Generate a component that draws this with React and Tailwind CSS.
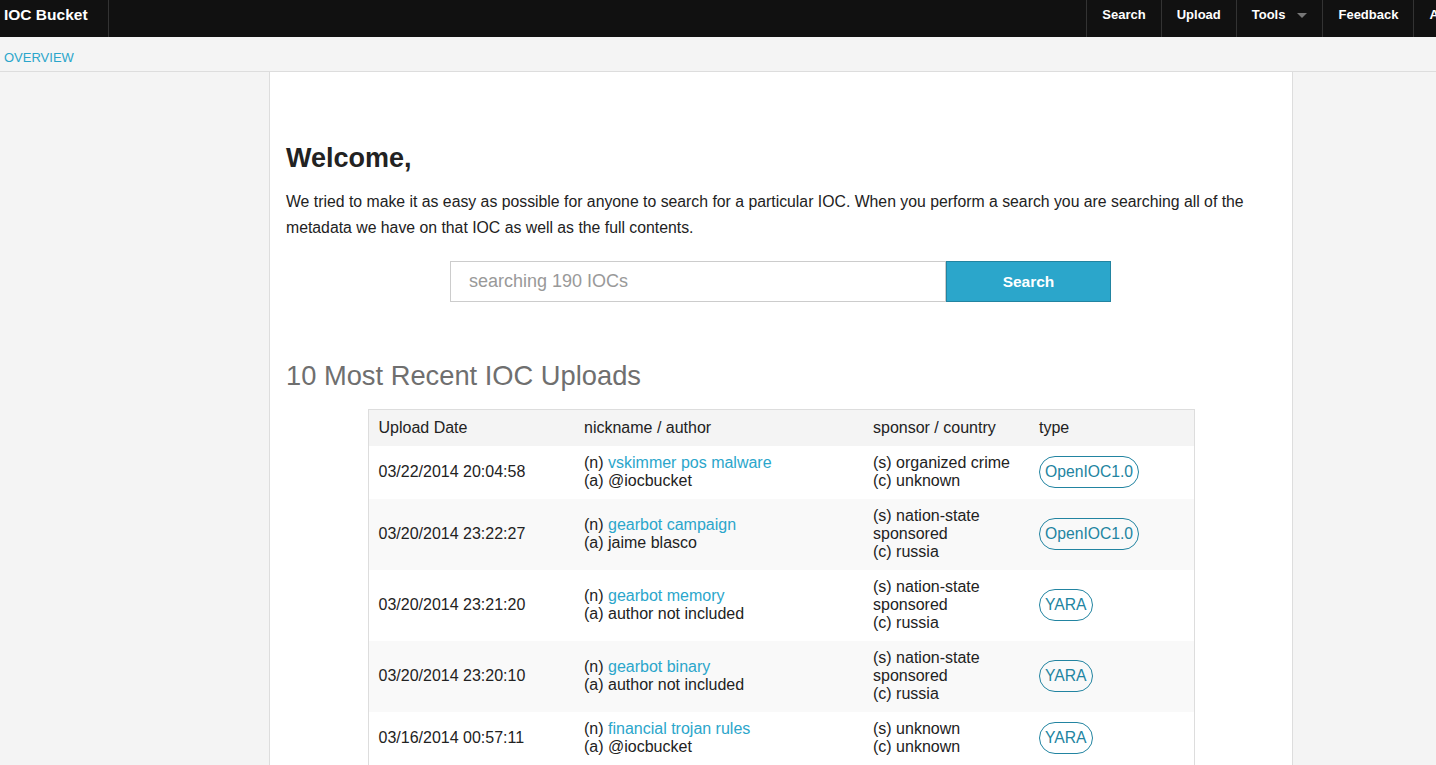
import React from 'react';

const rows = [
    { date: '03/22/2014 20:04:58', nick: 'vskimmer pos malware', author: '@iocbucket', sponsor: ['(s) organized crime'], country: 'unknown', type: 'OpenIOC1.0' },
    { date: '03/20/2014 23:22:27', nick: 'gearbot campaign', author: 'jaime blasco', sponsor: ['(s) nation-state', 'sponsored'], country: 'russia', type: 'OpenIOC1.0' },
    { date: '03/20/2014 23:21:20', nick: 'gearbot memory', author: 'author not included', sponsor: ['(s) nation-state', 'sponsored'], country: 'russia', type: 'YARA' },
    { date: '03/20/2014 23:20:10', nick: 'gearbot binary', author: 'author not included', sponsor: ['(s) nation-state', 'sponsored'], country: 'russia', type: 'YARA' },
    { date: '03/16/2014 00:57:11', nick: 'financial trojan rules', author: '@iocbucket', sponsor: ['(s) unknown'], country: 'unknown', type: 'YARA' },
    { date: '03/15/2014 18:40:02', nick: 'dexter pos', author: '@iocbucket', sponsor: ['(s) organized crime'], country: 'unknown', type: 'OpenIOC1.0' },
];

const NAV = ['Search', 'Upload', 'Tools', 'Feedback', 'About'];

export default function App() {
    return (
        <div className="h-[765px] overflow-hidden bg-[#f4f4f4] text-[#222] font-['Liberation_Sans',Arial,sans-serif]">
            {/* Top bar */}
            <div className="h-[37px] bg-[#111] flex items-stretch">
                <div className="w-[109px] border-r border-[#333] pl-[4px] flex items-center">
                    <span className="text-white font-bold text-[15.5px] -mt-[8px]">IOC Bucket</span>
                </div>
                <div className="flex-1" />
                <div className="flex items-stretch border-l border-[#333] -mr-[47px]">
                    {NAV.map(n => (
                        <div key={n} className="border-r border-[#333] flex items-center px-[15px] h-[37px] text-white font-bold text-[13px]">
                            <span className="-mt-[7px]">{n}</span>
                            {n === 'Tools' && (
                                <span className="ml-[12px] -mt-[7px] w-0 h-0 border-l-[5px] border-r-[5px] border-t-[5px] border-l-transparent border-r-transparent border-t-[#777]" />
                            )}
                        </div>
                    ))}
                </div>
            </div>

            {/* Sub nav */}
            <div className="h-[35px] border-b border-[#ddd] flex items-center px-[4px]">
                <a className="text-[#2ba6cb] text-[13px] mt-[7px]">OVERVIEW</a>
            </div>

            {/* Content */}
            <div className="w-[1024px] ml-[269px] bg-white border-x border-[#ddd] min-h-[700px] px-[16px] pt-[68px]">
                <h2 className="font-bold text-[27px] leading-[36px] text-[#222]">Welcome,</h2>
                <p className="mt-[13px] text-[15.8px] leading-[26px] text-[#222] pr-[20px]">
                    We tried to make it as easy as possible for anyone to search for a particular IOC. When you perform a search you are searching all of the metadata we have on that IOC as well as the full contents.
                </p>

                <div className="flex justify-center mt-[20px] pr-[1px]">
                    <div className="flex h-[41px]">
                        <input
                            placeholder="searching 190 IOCs"
                            className="w-[496px] h-[41px] border border-[#ccc] px-[18px] text-[18px] text-[#222] placeholder:text-[#999] outline-none font-['Liberation_Sans',Arial,sans-serif]"
                        />
                        <button className="w-[165px] h-[41px] bg-[#2ba6cb] border border-[#2284a1] text-white font-bold text-[15.5px]">
                            Search
                        </button>
                    </div>
                </div>

                <h3 className="mt-[56px] text-[27.3px] leading-[36px] text-[#6f6f6f]">10 Most Recent IOC Uploads</h3>

                <div className="mt-[15px] flex justify-center">
                    <table className="w-[827px] border border-[#ddd] border-collapse text-[16px] leading-[18px] text-[#222]">
                        <thead>
                            <tr className="bg-[#f4f4f4] h-[36px] text-left">
                                <th className="font-normal pl-[10px] w-[206px]">Upload Date</th>
                                <th className="font-normal pl-[10px] w-[289px]">nickname / author</th>
                                <th className="font-normal pl-[10px] w-[166px]">sponsor / country</th>
                                <th className="font-normal pl-[10px]">type</th>
                            </tr>
                        </thead>
                        <tbody>
                            {rows.map((r, i) => (
                                <tr key={i} className={i % 2 === 1 ? 'bg-[#f9f9f9]' : 'bg-white'}>
                                    <td className="pl-[10px] py-[8.5px] align-middle">{r.date}</td>
                                    <td className="pl-[10px] py-[8.5px] align-middle">
                                        <div>(n) <a className="text-[#2ba6cb]">{r.nick}</a></div>
                                        <div>(a) {r.author}</div>
                                    </td>
                                    <td className="pl-[10px] py-[8.5px] align-middle">
                                        {r.sponsor.map(s => <div key={s}>{s}</div>)}
                                        <div>(c) {r.country}</div>
                                    </td>
                                    <td className="pl-[10px] py-[8.5px] align-middle">
                                        <span className="inline-block border border-[#2284a1] rounded-full px-[5px] h-[32px] leading-[30px] text-[#2284a1] text-[15.7px]">
                                            {r.type}
                                        </span>
                                    </td>
                                </tr>
                            ))}
                        </tbody>
                    </table>
                </div>
            </div>
        </div>
    );
}
